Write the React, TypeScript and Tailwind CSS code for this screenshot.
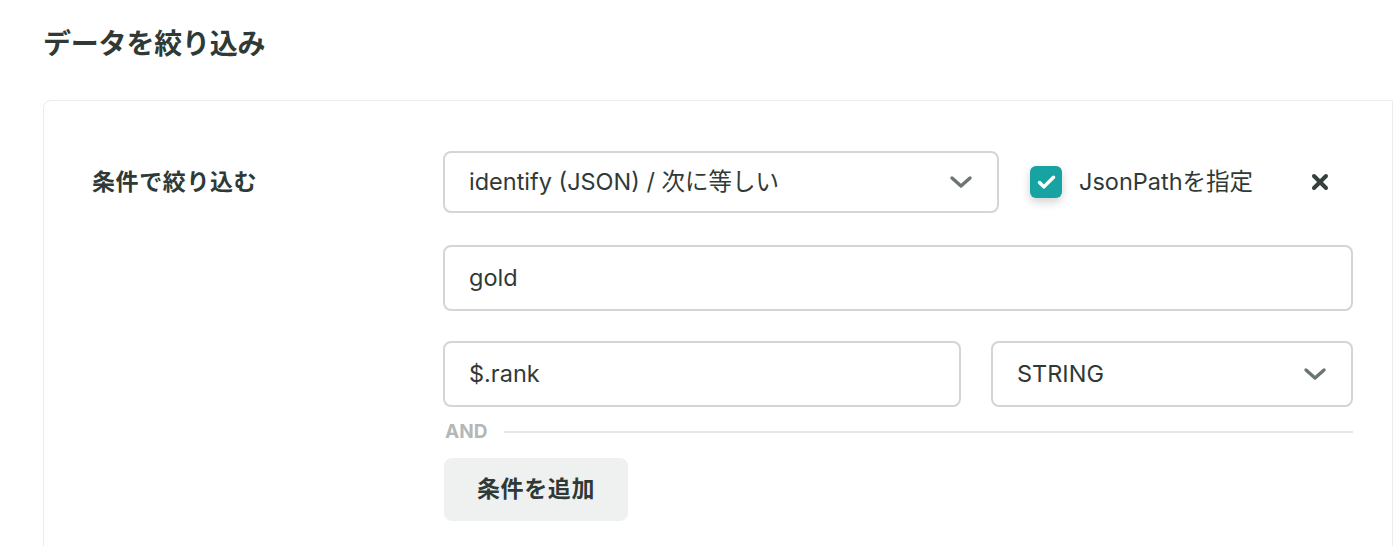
import { Check, X } from 'lucide-react';

function Chevron() {
  return (
    <svg width="24" height="14" viewBox="0 0 24 14" fill="none" aria-hidden="true">
      <path d="M3 3l9 8 9-8" stroke="#6b7674" strokeWidth="3.4" strokeLinecap="round" strokeLinejoin="round" />
    </svg>
  );
}

export default function App() {
  return (
    <div
      className="min-h-[546px] bg-white text-[#2f3a37]"
      style={{ fontFamily: 'Inter, "Noto Sans CJK JP", sans-serif' }}
    >
      <div className="pl-[43px] pt-6">
        <h1 className="text-[28px] font-bold leading-[40px] tracking-[-0.2px]">データを絞り込み</h1>

        {/* フィルター条件カード */}
        <div className="mt-9 mr-px min-h-[460px] rounded-tl-lg border border-[#ececec] pl-12 pt-[50px]">
          <div className="flex">
            <div className="flex h-[62px] w-[351px] items-center">
              <span className="text-[23px] font-bold tracking-[0.6px]">条件で絞り込む</span>
            </div>

            <div className="flex w-[910px] flex-col">
              <div className="flex h-[62px] items-center">
                <div className="flex h-[62px] w-[556px] items-center justify-between rounded-lg border-2 border-[#d2d6d5] pl-6 pr-6">
                  <span className="text-[23.5px]">identify (JSON) / 次に等しい</span>
                  <Chevron />
                </div>
                <span className="ml-[31px] flex h-8 w-8 items-center justify-center rounded-md bg-[#17a3a1] shadow-[0_4px_10px_rgba(0,0,0,0.18)]">
                  <Check size={21} strokeWidth={4} color="#ffffff" />
                </span>
                <span className="ml-[17px] text-[23.5px]">JsonPathを指定</span>
                <button className="ml-auto mr-[21px] flex h-6 w-6 items-center justify-center">
                  <X size={24} strokeWidth={4} color="#33403d" />
                </button>
              </div>

              <div className="mt-8 flex h-[66px] items-center rounded-lg border-2 border-[#d2d6d5] px-6">
                <span className="text-[23.5px]">gold</span>
              </div>

              <div className="mt-[30px] flex gap-[30px]">
                <div className="flex h-[66px] w-[518px] items-center rounded-lg border-2 border-[#d2d6d5] px-6">
                  <span className="text-[23.5px]">$.rank</span>
                </div>
                <div className="flex h-[66px] flex-1 items-center justify-between rounded-lg border-2 border-[#d2d6d5] pl-6 pr-6">
                  <span className="text-[23.5px]">STRING</span>
                  <Chevron />
                </div>
              </div>

              <div className="mt-[15px] flex h-5 items-center gap-[17px] pl-[2px]">
                <span className="text-[19px] font-bold text-[#b3b8b7]">AND</span>
                <div className="h-[1.5px] flex-1 bg-[#e6e8e8]" />
              </div>

              <button className="ml-px mt-4 flex h-[63px] w-[184px] items-center justify-center rounded-lg bg-[#eff1f1] text-[23px] font-bold tracking-[0.6px]">
                条件を追加
              </button>
            </div>
          </div>
        </div>
      </div>
    </div>
  );
}
